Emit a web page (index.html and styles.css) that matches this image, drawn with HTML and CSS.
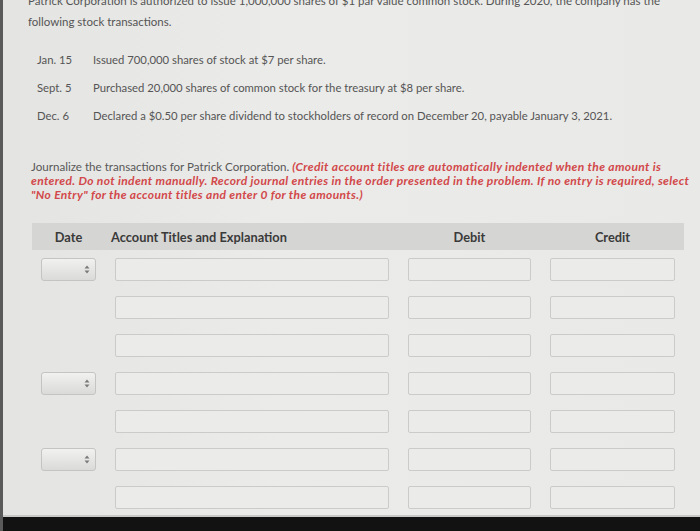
FILE: index.html
```html
<!DOCTYPE html>
<html>
<head>
<meta charset="utf-8">
<link rel="stylesheet" href="styles.css">
</head>
<body>
<div class="screen">
  <main class="page">
    <p class="intro">Patrick Corporation is authorized to issue 1,000,000 shares of $1 par value common stock. During 2020, the company has the<br>following stock transactions.</p>

    <div class="transactions">
      <span class="tdate">Jan. 15</span><span class="tdesc">Issued 700,000 shares of stock at $7 per share.</span>
      <span class="tdate">Sept. 5</span><span class="tdesc">Purchased 20,000 shares of common stock for the treasury at $8 per share.</span>
      <span class="tdate">Dec. 6</span><span class="tdesc">Declared a $0.50 per share dividend to stockholders of record on December 20, payable January 3, 2021.</span>
    </div>

    <p class="instructions">Journalize the transactions for Patrick Corporation. <em class="hint">(Credit account titles are automatically indented when the amount is<br>entered. Do not indent manually. Record journal entries in the order presented in the problem. If no entry is required, select<br>"No Entry" for the account titles and enter 0 for the amounts.)</em></p>

    <div class="journal">
      <div class="jhead">
        <span class="h-date">Date</span>
        <span class="h-acct">Account Titles and Explanation</span>
        <span class="h-num">Debit</span>
        <span class="h-num">Credit</span>
      </div>
      <div class="jrows">
        <div class="sel"><svg width="6" height="9" viewBox="0 0 6 9"><path d="M3 0.5 L5.5 3.5 H0.5 Z M3 8.5 L0.5 5.5 H5.5 Z" fill="#7a7a7a"/></svg></div>
        <div class="inp"></div><div class="inp"></div><div class="inp"></div>

        <div class="blank"></div>
        <div class="inp"></div><div class="inp"></div><div class="inp"></div>

        <div class="blank"></div>
        <div class="inp"></div><div class="inp"></div><div class="inp"></div>

        <div class="sel"><svg width="6" height="9" viewBox="0 0 6 9"><path d="M3 0.5 L5.5 3.5 H0.5 Z M3 8.5 L0.5 5.5 H5.5 Z" fill="#7a7a7a"/></svg></div>
        <div class="inp"></div><div class="inp"></div><div class="inp"></div>

        <div class="blank"></div>
        <div class="inp"></div><div class="inp"></div><div class="inp"></div>

        <div class="sel"><svg width="6" height="9" viewBox="0 0 6 9"><path d="M3 0.5 L5.5 3.5 H0.5 Z M3 8.5 L0.5 5.5 H5.5 Z" fill="#7a7a7a"/></svg></div>
        <div class="inp"></div><div class="inp"></div><div class="inp"></div>

        <div class="blank"></div>
        <div class="inp"></div><div class="inp"></div><div class="inp"></div>
      </div>
    </div>
  </main>
  <footer class="bezel"></footer>
</div>
</body>
</html>
```

FILE: styles.css
```css
html, body {
  margin: 0;
  padding: 0;
  height: 100%;
  overflow: hidden;
}
body {
  background: #e8e8e6;
  font-family: Lato, "Open Sans", "DejaVu Sans", sans-serif;
  color: #505050;
}
.screen {
  height: 531px;
  display: flex;
  flex-direction: column;
  border-left: 3px solid #5a5a5a;
  box-sizing: border-box;
  background: linear-gradient(to right, #e4e4e2 0%, #ebebe9 40%, #e9e9e7 100%);
}
.page {
  flex: 1;
  overflow: hidden;
  padding: 0;
}
.intro {
  margin: -10px 0 0 25px;
  font-size: 11.5px;
  line-height: 21px;
  color: #555;
  white-space: nowrap;
}
.transactions {
  display: grid;
  grid-template-columns: 56px auto;
  row-gap: 10px;
  margin: 19px 0 0 34px;
  font-size: 11.3px;
  line-height: 18px;
  color: #555;
}
.instructions {
  margin: 35px 0 0 28px;
  font-size: 11.6px;
  line-height: 14px;
  color: #585858;
  white-space: nowrap;
}
.hint {
  color: #d2484a;
  font-style: italic;
  font-weight: 700;
  font-size: 12px;
  letter-spacing: 0.35px;
}
.journal {
  margin: 21px 0 0 29px;
  width: 652px;
}
.jhead {
  display: grid;
  grid-template-columns: 55px 274px 123px 125px;
  column-gap: 19px;
  padding: 0 9px;
  height: 27px;
  align-items: center;
  background: #d5d5d3;
  font-size: 12.8px;
  font-weight: 700;
  color: #3a3a3a;
}
.h-date { text-align: center; }
.h-acct { margin-left: -4px; }
.h-num { text-align: center; }
.jrows {
  display: grid;
  grid-template-columns: 55px 274px 123px 125px;
  grid-auto-rows: 23px;
  column-gap: 19px;
  row-gap: 15px;
  padding: 8px 9px 0;
}
.inp {
  box-sizing: border-box;
  background: #ebebea;
  border: 1px solid #cbcbc9;
  border-radius: 2px;
}
.sel {
  box-sizing: border-box;
  border: 1px solid #c4c4c2;
  border-radius: 3px;
  background: linear-gradient(to bottom, #f1f1f0, #dadad8);
  display: flex;
  align-items: center;
  justify-content: flex-end;
  padding-right: 5px;
}
.bezel {
  height: 14px;
  flex: none;
  background: #121212;
  border-top: 2px solid #c8c8c6;
}
```
